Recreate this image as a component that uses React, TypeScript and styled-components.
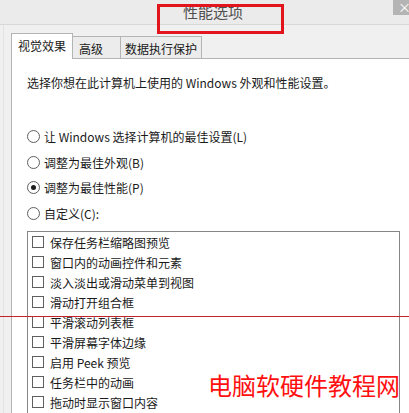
import * as React from "react";
import styled, { createGlobalStyle } from "styled-components";

const GlobalStyle = createGlobalStyle`
  html, body {
    margin: 0;
    padding: 0;
    background: #f0f0f0;
  }
  * {
    box-sizing: border-box;
  }
`;

const SWindow = styled.div`
  position: relative;
  width: 409px;
  height: 413px;
  overflow: hidden;
  display: flex;
  flex-direction: column;
  background: #f0f0f0;
  font-family: "Noto Sans CJK SC", "Noto Sans", sans-serif;
  font-size: 12px;
  color: #1a1a1a;
`;

const STitleBar = styled.div`
  display: flex;
  height: 25px;
  flex-shrink: 0;
  background: #ebebeb;
  border-bottom: 1px solid #d8d8d8;
`;

const STitle = styled.div`
  flex: 1;
  padding-left: 33px;
  text-align: center;
  font-size: 15px;
  line-height: 23px;
  color: #4f4f4f;
`;

const SClose = styled.div`
  width: 16px;
  height: 15px;
  background: #b4b4b4;
  color: #fff;
  font-size: 13px;
  line-height: 14px;
  padding-left: 5px;
  overflow: hidden;
`;

const SBody = styled.div`
  flex: 1;
  display: flex;
  flex-direction: column;
  margin-left: 3px;
  padding: 8px 0 0 7px;
  border-left: 1px solid #e2e2e2;
`;

const STabRow = styled.div`
  display: flex;
  align-items: flex-end;
  height: 26px;
  position: relative;
  z-index: 1;
`;

const STab = styled.div<{ $active?: boolean; $w: number; $pad: number }>`
  width: ${(p) => p.$w}px;
  height: ${(p) => (p.$active ? 26 : 22)}px;
  margin-bottom: ${(p) => (p.$active ? 0 : 1)}px;
  padding-left: ${(p) => p.$pad}px;
  background: ${(p) => (p.$active ? "#fff" : "#ececec")};
  border: 1px solid #b4b4b4;
  border-bottom: none;
  border-left: ${(p) => (p.$active ? "1px solid #b4b4b4" : "none")};
  line-height: ${(p) => (p.$active ? 24 : 23)}px;
  white-space: nowrap;
`;

const SPanel = styled.div`
  flex: 1;
  margin-top: -1px;
  padding: 16px 0 0 15px;
  background: #fff;
  border-top: 1px solid #b4b4b4;
  border-left: 1px solid #b4b4b4;
`;

const SDesc = styled.p`
  margin: 0;
  line-height: 16px;
`;

const SRadioGroup = styled.div`
  margin-top: 33px;
  display: flex;
  flex-direction: column;
`;

const SRadioRow = styled.div`
  display: flex;
  align-items: center;
  height: 25.5px;
  gap: 4px;
`;

const SRadio = styled.span<{ $checked?: boolean }>`
  width: 13px;
  height: 13px;
  border-radius: 50%;
  border: 1px solid #5f5f5f;
  background: #fff;
  display: flex;
  align-items: center;
  justify-content: center;

  &::after {
    content: "";
    width: 5px;
    height: 5px;
    border-radius: 50%;
    background: ${(p) => (p.$checked ? "#1e1e1e" : "transparent")};
  }
`;

const SList = styled.div`
  margin-top: 5px;
  width: 373px;
  height: 200px;
  border: 1px solid #858585;
  padding-left: 4px;
`;

const SCheckRow = styled.div`
  display: flex;
  align-items: center;
  height: 20px;
  gap: 6px;
`;

const SCheckbox = styled.span`
  width: 12px;
  height: 12px;
  border: 1px solid #5f5f5f;
  background: #fff;
`;

const SRedBox = styled.div`
  position: absolute;
  left: 157px;
  top: 4px;
  width: 127px;
  height: 30px;
  border: 3px solid #e2141c;
`;

const SRedLine = styled.div`
  position: absolute;
  left: 0;
  top: 316px;
  width: 100%;
  height: 1px;
  background: #c2232b;
`;

const SWatermark = styled.div`
  position: absolute;
  left: 208px;
  top: 372px;
  font-size: 24px;
  line-height: 26px;
  color: #ff1010;
  white-space: nowrap;
`;

const tabs = [
  { label: "视觉效果", w: 62, pad: 6, active: true },
  { label: "高级", w: 48, pad: 6 },
  { label: "数据执行保护", w: 81, pad: 4 },
];

const radios = [
  { label: "让 Windows 选择计算机的最佳设置(L)" },
  { label: "调整为最佳外观(B)" },
  { label: "调整为最佳性能(P)", checked: true },
  { label: "自定义(C):" },
];

const options = [
  "保存任务栏缩略图预览",
  "窗口内的动画控件和元素",
  "淡入淡出或滑动菜单到视图",
  "滑动打开组合框",
  "平滑滚动列表框",
  "平滑屏幕字体边缘",
  "启用 Peek 预览",
  "任务栏中的动画",
  "拖动时显示窗口内容",
];

export default function App() {
  return (
    <SWindow>
      <GlobalStyle />
      <STitleBar>
        <STitle>性能选项</STitle>
        <SClose>×</SClose>
      </STitleBar>
      <SBody>
        <STabRow>
          {tabs.map((t) => (
            <STab key={t.label} $active={t.active} $w={t.w} $pad={t.pad}>
              {t.label}
            </STab>
          ))}
        </STabRow>
        <SPanel>
          <SDesc>选择你想在此计算机上使用的 Windows 外观和性能设置。</SDesc>
          <SRadioGroup>
            {radios.map((r) => (
              <SRadioRow key={r.label}>
                <SRadio $checked={r.checked} />
                <span>{r.label}</span>
              </SRadioRow>
            ))}
          </SRadioGroup>
          <SList>
            {options.map((o) => (
              <SCheckRow key={o}>
                <SCheckbox />
                <span>{o}</span>
              </SCheckRow>
            ))}
          </SList>
        </SPanel>
      </SBody>
      <SRedBox />
      <SRedLine />
      <SWatermark>电脑软硬件教程网</SWatermark>
    </SWindow>
  );
}
